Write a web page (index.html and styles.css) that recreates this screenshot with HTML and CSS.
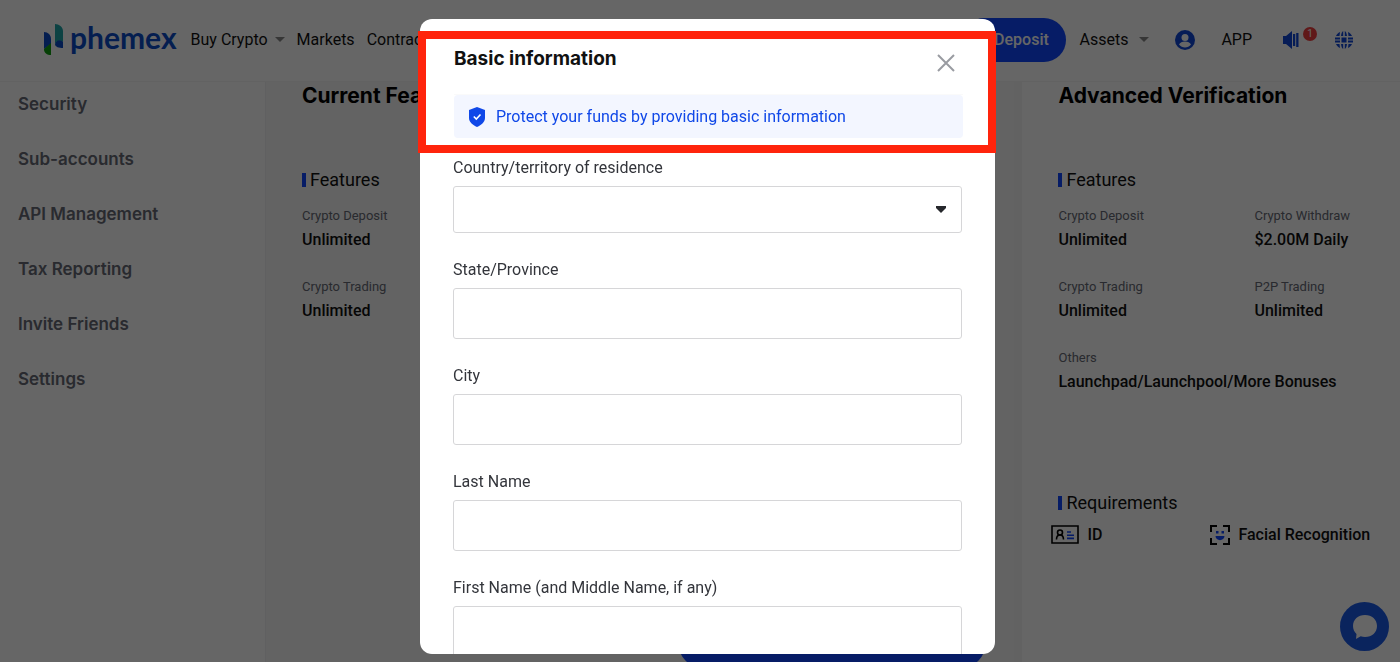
FILE: index.html
```html
<!DOCTYPE html>
<html lang="en">
<head>
    <meta charset="UTF-8">
    <meta name="viewport" content="width=device-width, initial-scale=1.0">
    <title>Phemex - Verification</title>
    <link rel="stylesheet" href="styles.css">
</head>
<body>
    <header class="navbar">
        <a href="#" class="logo">
            <svg class="logo_mark" viewBox="0 0 21 32" aria-hidden="true">
                <path d="M1 8c4 0 7 3 7 7v5L1 25z" fill="#0c4bc8"/>
                <path d="M1 25l7-6v12c-4 0-7-2-7-6z" fill="#10a010"/>
                <path d="M12 0c4 0 8 3 8 7v11c-3-2-6-2-8 2z" fill="#1fa5a9"/>
                <path d="M12 20c2-5 6-4 8-2v6c-4 0-8-1-8-4z" fill="#0c4bc8"/>
            </svg>
            <span class="logo_text">phemex</span>
        </a>
        <nav class="nav_links">
            <a href="#">Buy Crypto <span class="caret"></span></a>
            <a href="#">Markets</a>
            <a href="#">Contract</a>
        </nav>
        <div class="nav_right">
            <button type="button" class="deposit_btn">Deposit</button>
            <a href="#" class="link_assets">Assets <span class="caret"></span></a>
            <button type="button" class="icon_btn user_btn" aria-label="Account">
                <svg width="20" height="20" viewBox="0 0 20 20">
                    <circle cx="10" cy="10" r="10" fill="#1048d8"/>
                    <circle cx="10" cy="7.500" r="3.500" fill="#fff"/>
                    <path d="M4 14.500c1-2 3.200-3 6-3s5 1 6 3c-3 4-9 4-12 0z" fill="#fff"/>
                </svg>
            </button>
            <a href="#" class="link_app">APP</a>
            <button type="button" class="icon_btn notice_btn" aria-label="Announcements">
                <svg width="16" height="18" viewBox="0 0 16 18" fill="#1048d8">
                    <path d="M0 5h3l6-5v18l-6-5H0z"/>
                    <path d="M10 3h2.200v12H10zM13.200 2h2.300v14h-2.300z"/>
                </svg>
                <span class="badge">1</span>
            </button>
            <button type="button" class="icon_btn" aria-label="Language">
                <svg width="18" height="18" viewBox="0 0 18 18" fill="#1048d8">
                    <path d="M6.500 6.500h5v5h-5zM0 6.500h5v2H0zM0 9.500h5v2H0zM13 6.500h5v2h-5zM13 9.500h5v2h-5z"/>
                    <path d="M8.200 0v5H6c.3-2.500 1-4.200 2.200-5zM9.800 0v5H12c-.3-2.500-1-4.200-2.200-5zM8.200 18v-5H6c.3 2.500 1 4.200 2.200 5zM9.800 18v-5H12c-.3 2.500-1 4.200-2.200 5z"/>
                    <path d="M1 5c.8-1.800 2-3 4-4L4.500 5zM17 5c-.8-1.800-2-3-4-4l.5 4zM1 13c.8 1.800 2 3 4 4l-.5-4zM17 13c-.8 1.800-2 3-4 4l.5-4z"/>
                </svg>
            </button>
        </div>
    </header>

    <div class="page">
        <aside class="sidebar">
            <a href="#">Security</a>
            <a href="#">Sub-accounts</a>
            <a href="#">API Management</a>
            <a href="#">Tax Reporting</a>
            <a href="#">Invite Friends</a>
            <a href="#">Settings</a>
        </aside>
        <main class="main">
            <section class="panel current">
                <h2>Current Features</h2>
                <h3>Features</h3>
                <dl class="features">
                    <div><dt>Crypto Deposit</dt><dd>Unlimited</dd></div>
                    <div><dt>Crypto Trading</dt><dd>Unlimited</dd></div>
                </dl>
                <button type="button" class="verify_btn" aria-label="Verify"></button>
            </section>
            <section class="panel advanced">
                <h2>Advanced Verification</h2>
                <h3>Features</h3>
                <dl class="features">
                    <div><dt>Crypto Deposit</dt><dd>Unlimited</dd></div>
                    <div><dt>Crypto Withdraw</dt><dd>$2.00M Daily</dd></div>
                    <div><dt>Crypto Trading</dt><dd>Unlimited</dd></div>
                    <div><dt>P2P Trading</dt><dd>Unlimited</dd></div>
                    <div class="wide"><dt>Others</dt><dd>Launchpad/Launchpool/More Bonuses</dd></div>
                </dl>
                <h3 class="req_title">Requirements</h3>
                <ul class="requirements">
                    <li>
                        <svg width="28" height="20" viewBox="0 0 28 20" fill="none" stroke="#000" stroke-width="1.600">
                            <path d="M1 1h26v17H1z"/>
                            <circle cx="9" cy="7.500" r="2.500"/>
                            <path d="M5.500 14.500c0-6 7-6 7 0"/>
                            <path d="M16 7h4M16 10.200h7M16 13.400h7" stroke="#1048ff"/>
                        </svg>
                        ID
                    </li>
                    <li>
                        <svg width="20" height="20" viewBox="0 0 20 20" fill="none" stroke="#000" stroke-width="2">
                            <path d="M1 7V1h6M13 1h6v6M19 13v6h-6M7 19H1v-6"/>
                            <path d="M6 6h2.500v2.500H6zM11.500 6H14v2.500h-2.500zM5.500 11h9c0 5.500-9 5.500-9 0z" fill="#1048ff" stroke="none"/>
                        </svg>
                        Facial Recognition
                    </li>
                </ul>
            </section>
        </main>
    </div>

    <button type="button" class="chat_btn" aria-label="Chat">
        <svg width="26" height="26" viewBox="0 0 26 26" fill="#fff">
            <path d="M13 1c7 0 12 4.500 12 11s-5 11-12 11c-1.500 0-3-.2-4.300-.7L4 25l.5-5C2.300 18 1 15.300 1 12 1 5.500 6 1 13 1z"/>
        </svg>
    </button>

    <div class="overlay">
        <div class="modal" role="dialog" aria-labelledby="modal_title">
            <div class="highlight">
                <div class="modal_header">
                    <h1 id="modal_title">Basic information</h1>
                    <button type="button" class="close_btn" aria-label="Close">
                        <svg width="18" height="18" viewBox="0 0 18 18" stroke="#999ba1" stroke-width="2">
                            <path d="M1 1l16 16M17 1L1 17"/>
                        </svg>
                    </button>
                </div>
                <p class="notice">
                    <svg width="16" height="20" viewBox="0 0 16 20">
                        <path d="M8 0l8 3v8c0 4-3.500 7-8 9-4.500-2-8-5-8-9V3z" fill="#1048e8"/>
                        <path d="M4.800 9.500l2.500 2.500 4.200-4.500" fill="none" stroke="#fff" stroke-width="1.600"/>
                    </svg>
                    Protect your funds by providing basic information
                </p>
            </div>
            <form class="form">
                <label for="country">Country/territory of residence</label>
                <div class="select_box">
                    <select id="country"><option></option></select>
                </div>
                <label for="state">State/Province</label>
                <input type="text" id="state">
                <label for="city">City</label>
                <input type="text" id="city">
                <label for="last_name">Last Name</label>
                <input type="text" id="last_name">
                <label for="first_name">First Name (and Middle Name, if any)</label>
                <input type="text" id="first_name">
            </form>
        </div>
    </div>
</body>
</html>
```
FILE: styles.css
```css
* {
    box-sizing: border-box;
}

body {
    margin: 0;
    height: 100vh;
    overflow: hidden;
    display: flex;
    flex-direction: column;
    font-family: Roboto, "Liberation Sans", sans-serif;
    font-size: 16px;
    line-height: 20px;
    color: #111;
    background: #fff;
}

a {
    color: inherit;
    text-decoration: none;
}

button {
    font-family: inherit;
    border: 0;
    padding: 0;
}

.navbar {
    display: flex;
    align-items: center;
    flex: none;
    height: 82px;
    padding: 0 47px 2px 43px;
    border-bottom: 1px solid #f4f4f4;
}

.logo {
    display: flex;
    align-items: center;
    gap: 6px;
    margin-right: 14px;
    color: #0c4bc8;
}

.logo_mark {
    width: 21px;
    height: 32px;
}

.logo_text {
    font-family: Lato, sans-serif;
    font-size: 30px;
    font-weight: 700;
    line-height: 32px;
    padding-bottom: 6px;
}

.nav_links {
    display: flex;
    gap: 12px;
}

.caret {
    display: inline-block;
    margin-left: 3px;
    vertical-align: 3px;
    border: 5px solid transparent;
    border-top-color: #888;
    border-bottom: 0;
}

.nav_right {
    display: flex;
    align-items: center;
    margin-left: auto;
}

.deposit_btn {
    width: 104px;
    height: 44px;
    padding-left: 14px;
    margin-right: 13px;
    border-radius: 22px;
    background: #1048ff;
    color: #fff;
    font-size: 16px;
    font-weight: 500;
}

.link_assets .caret {
    margin-left: 7px;
}

.icon_btn {
    display: flex;
    background: none;
}

.user_btn {
    margin: 0 26px;
}

.link_app {
    margin-right: 31px;
}

.notice_btn {
    gap: 4px;
    margin-right: 18px;
}

.badge {
    width: 14px;
    height: 14px;
    border-radius: 50%;
    background: #f04040;
    color: #fff;
    font-size: 10px;
    line-height: 14px;
    margin-top: -4px;
}

.page {
    display: flex;
    flex: 1;
    min-height: 0;
}

.sidebar {
    display: flex;
    flex-direction: column;
    gap: 35px;
    width: 19%;
    padding: 12px 18px;
    border-right: 1px solid #f0f0f2;
    color: #666a75;
    font-family: Inter, sans-serif;
    font-size: 17px;
    font-weight: 600;
}

.main {
    display: grid;
    grid-template-columns: 66% 34%;
    flex: 1;
    background: #f7f7f7;
}

.panel {
    padding: 0 0 0 36px;
    min-width: 0;
}

.current {
    display: flex;
    flex-direction: column;
    padding-right: 29px;
}

.advanced {
    background: #fff;
    border-left: 8px solid #f4f4f4;
}

h1, h2, h3, p, dl, dd, ul {
    margin: 0;
    padding: 0;
}

h2 {
    font-family: Inter, sans-serif;
    font-size: 21px;
    font-weight: 700;
    line-height: 28px;
    color: #000;
}

h3 {
    display: flex;
    align-items: center;
    gap: 4px;
    margin-top: 58px;
    font-size: 18px;
    font-weight: 400;
    line-height: 24px;
}

h3::before {
    content: "";
    width: 4px;
    height: 14px;
    background: #1048ff;
}

.features {
    display: grid;
    grid-template-columns: 196px auto;
    justify-content: start;
    row-gap: 23px;
    margin-top: 14px;
}

.current .features {
    grid-template-columns: auto;
}

.wide {
    grid-column: 1 / 3;
}

dt {
    color: #666a75;
    font-size: 13px;
    line-height: 20px;
}

dd {
    font-weight: 500;
    line-height: 28px;
}

.verify_btn {
    flex: none;
    align-self: flex-end;
    width: 306px;
    height: 44px;
    margin: auto 0 -5px;
    border-radius: 22px;
    background: #1048ff;
}

.req_title {
    margin-top: 95px;
}

.requirements {
    display: flex;
    gap: 108px;
    margin: 10px 0 0 -7px;
    list-style: none;
    font-weight: 500;
}

.requirements li {
    display: flex;
    gap: 8px;
    white-space: nowrap;
}

.chat_btn {
    position: fixed;
    right: 11px;
    bottom: 11px;
    display: flex;
    align-items: center;
    justify-content: center;
    width: 49px;
    height: 49px;
    border-radius: 50%;
    background: #1a5ae8;
}

.overlay {
    position: fixed;
    inset: 0;
    display: flex;
    justify-content: center;
    padding: 19px 0 8px;
    background: rgba(0, 0, 0, 0.6);
}

.modal {
    width: 575px;
    margin-left: 15px;
    border-radius: 12px;
    background: #fff;
    clip-path: inset(0 -2px 0 -2px round 12px);
}

.highlight {
    margin: 12px -1px 0 -2px;
    padding: 8px 25px 7px 28px;
    border: 8px solid #ff240c;
}

.modal_header {
    display: flex;
    justify-content: space-between;
    align-items: flex-start;
    height: 48px;
    border-bottom: 1px solid #fafafa;
}

h1 {
    font-family: Inter, sans-serif;
    font-size: 19px;
    font-weight: 700;
    line-height: 24px;
}

.close_btn {
    display: flex;
    margin: 7px 8px 0 0;
    background: none;
}

.notice {
    display: flex;
    align-items: center;
    gap: 11px;
    height: 43px;
    padding: 0 15px;
    border-radius: 4px;
    background: #f3f6ff;
    color: #1048e8;
}

.form {
    display: flex;
    flex-direction: column;
    padding: 5px 33px 0;
}

.form label {
    color: #33353b;
    margin-bottom: 8px;
}

.form input,
.form select {
    width: 100%;
    height: 51px;
    border: 1px solid #d6d6d8;
    border-radius: 3px;
    background: #fff;
    margin-bottom: 27px;
    padding: 0 14px;
    font-size: 16px;
}

.form select {
    display: block;
    height: 47px;
    appearance: none;
}

.select_box {
    display: grid;
}

.select_box select {
    grid-area: 1 / 1;
}

.select_box::after {
    content: "";
    grid-area: 1 / 1;
    justify-self: end;
    margin: 20px 16px 0 0;
    width: 10px;
    height: 7px;
    background: #26282c;
    clip-path: polygon(0 0, 100% 0, 100% 30%, 50% 100%, 0 30%);
    pointer-events: none;
}
```
